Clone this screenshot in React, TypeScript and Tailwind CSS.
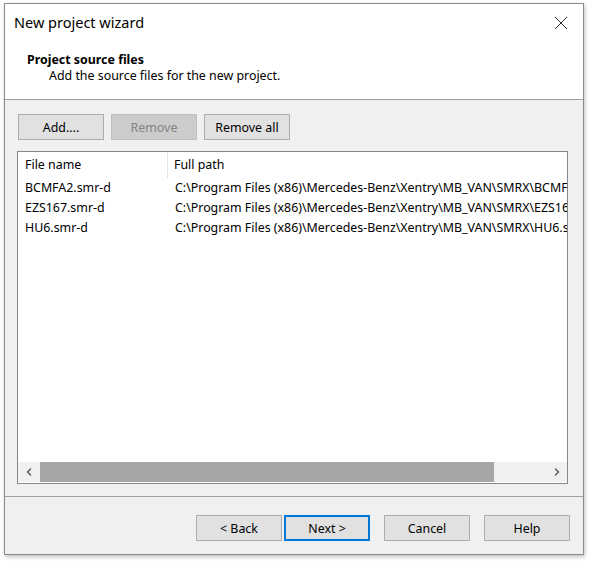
import { ChevronLeft, ChevronRight } from 'lucide-react';

const files = [
    { name: 'BCMFA2.smr-d', path: 'C:\\Program Files (x86)\\Mercedes-Benz\\Xentry\\MB_VAN\\SMRX\\BCMFA2.smr-d' },
    { name: 'EZS167.smr-d', path: 'C:\\Program Files (x86)\\Mercedes-Benz\\Xentry\\MB_VAN\\SMRX\\EZS167.smr-d' },
    { name: 'HU6.smr-d', path: 'C:\\Program Files (x86)\\Mercedes-Benz\\Xentry\\MB_VAN\\SMRX\\HU6.smr-d' },
];

function Btn({ label, disabled, primary }: { label: string; disabled?: boolean; primary?: boolean }) {
    return (
        <button
            className={
                'w-[86px] h-[26px] text-[12.4px] leading-none pt-[2px] border ' +
                (disabled
                    ? 'bg-[#cccccc] border-[#bfbfbf] text-[#838383]'
                    : primary
                      ? 'bg-[#e1e1e1] border-2 border-[#0078d7] text-black'
                      : 'bg-[#e1e1e1] border-[#adadad] text-black')
            }
        >
            {label}
        </button>
    );
}

export default function App() {
    return (
        <div
            className="w-[590px] h-[562px] bg-white pl-[4px] pt-[3px]"
            style={{ fontFamily: '"Noto Sans", "Open Sans", sans-serif' }}
        >
            <div className="w-[580px] h-[552px] border border-[#8a8a8a] shadow-[1px_2px_4px_rgba(0,0,0,0.25)] flex flex-col bg-[#f0f0f0]">
                {/* Header */}
                <div className="bg-white border-b border-[#a0a0a0] h-[96px] flex flex-col">
                    <div className="flex items-center justify-between h-[37px] pl-[9px] pr-[14px]">
                        <span className="text-[14.5px] text-black">New project wizard</span>
                        <svg width="14" height="14" viewBox="0 0 14 14" className="mr-[1px]">
                            <path d="M1 1 L13 13 M13 1 L1 13" stroke="#111" strokeWidth="0.9" />
                        </svg>
                    </div>
                    <div className="pl-[22px] pt-[11px]">
                        <div className="text-[12.4px] font-bold text-black leading-[16px]">Project source files</div>
                        <div className="text-[12.4px] text-black leading-[16px] pl-[22px]">
                            Add the source files for the new project.
                        </div>
                    </div>
                </div>

                {/* Body */}
                <div className="flex-1 flex flex-col pl-[12px] pr-[15px] pt-[14px] border-b border-[#a0a0a0]">
                    <div className="flex gap-[7px] pl-[1px]">
                        <Btn label="Add...." />
                        <Btn label="Remove" disabled />
                        <Btn label="Remove all" />
                    </div>
                    <div className="mt-[11px] h-[333px] border border-[#828790] bg-white flex flex-col">
                        <div className="flex-1 overflow-hidden text-[12.4px] text-black">
                            <div className="flex h-[26px] items-center">
                                <div className="w-[150px] pl-[7px] h-full flex items-center border-r border-[#e5e5e5]">
                                    File name
                                </div>
                                <div className="pl-[6px]">Full path</div>
                            </div>
                            {files.map((f) => (
                                <div key={f.name} className="flex h-[20px] items-center whitespace-nowrap">
                                    <div className="w-[150px] pl-[7px] shrink-0">{f.name}</div>
                                    <div className="pl-[7px]">{f.path}</div>
                                </div>
                            ))}
                        </div>
                        <div className="h-[20px] flex bg-[#f0f0f0] mb-[1px]">
                            <div className="w-[22px] flex items-center justify-center">
                                <ChevronLeft className="w-[12px] h-[12px] text-[#606060]" strokeWidth={3} />
                            </div>
                            <div className="w-[454px] bg-[#a6a6a6]" />
                            <div className="flex-1" />
                            <div className="w-[20px] flex items-center justify-center">
                                <ChevronRight className="w-[12px] h-[12px] text-[#606060]" strokeWidth={3} />
                            </div>
                        </div>
                    </div>
                </div>

                {/* Footer */}
                <div className="h-[57px] flex items-start justify-end pt-[18px] pr-[13px]">
                    <div className="flex">
                        <Btn label="< Back" />
                        <div className="ml-[2px]">
                            <Btn label="Next >" primary />
                        </div>
                        <div className="ml-[14px]">
                            <Btn label="Cancel" />
                        </div>
                        <div className="ml-[14px]">
                            <Btn label="Help" />
                        </div>
                    </div>
                </div>
            </div>
        </div>
    );
}
